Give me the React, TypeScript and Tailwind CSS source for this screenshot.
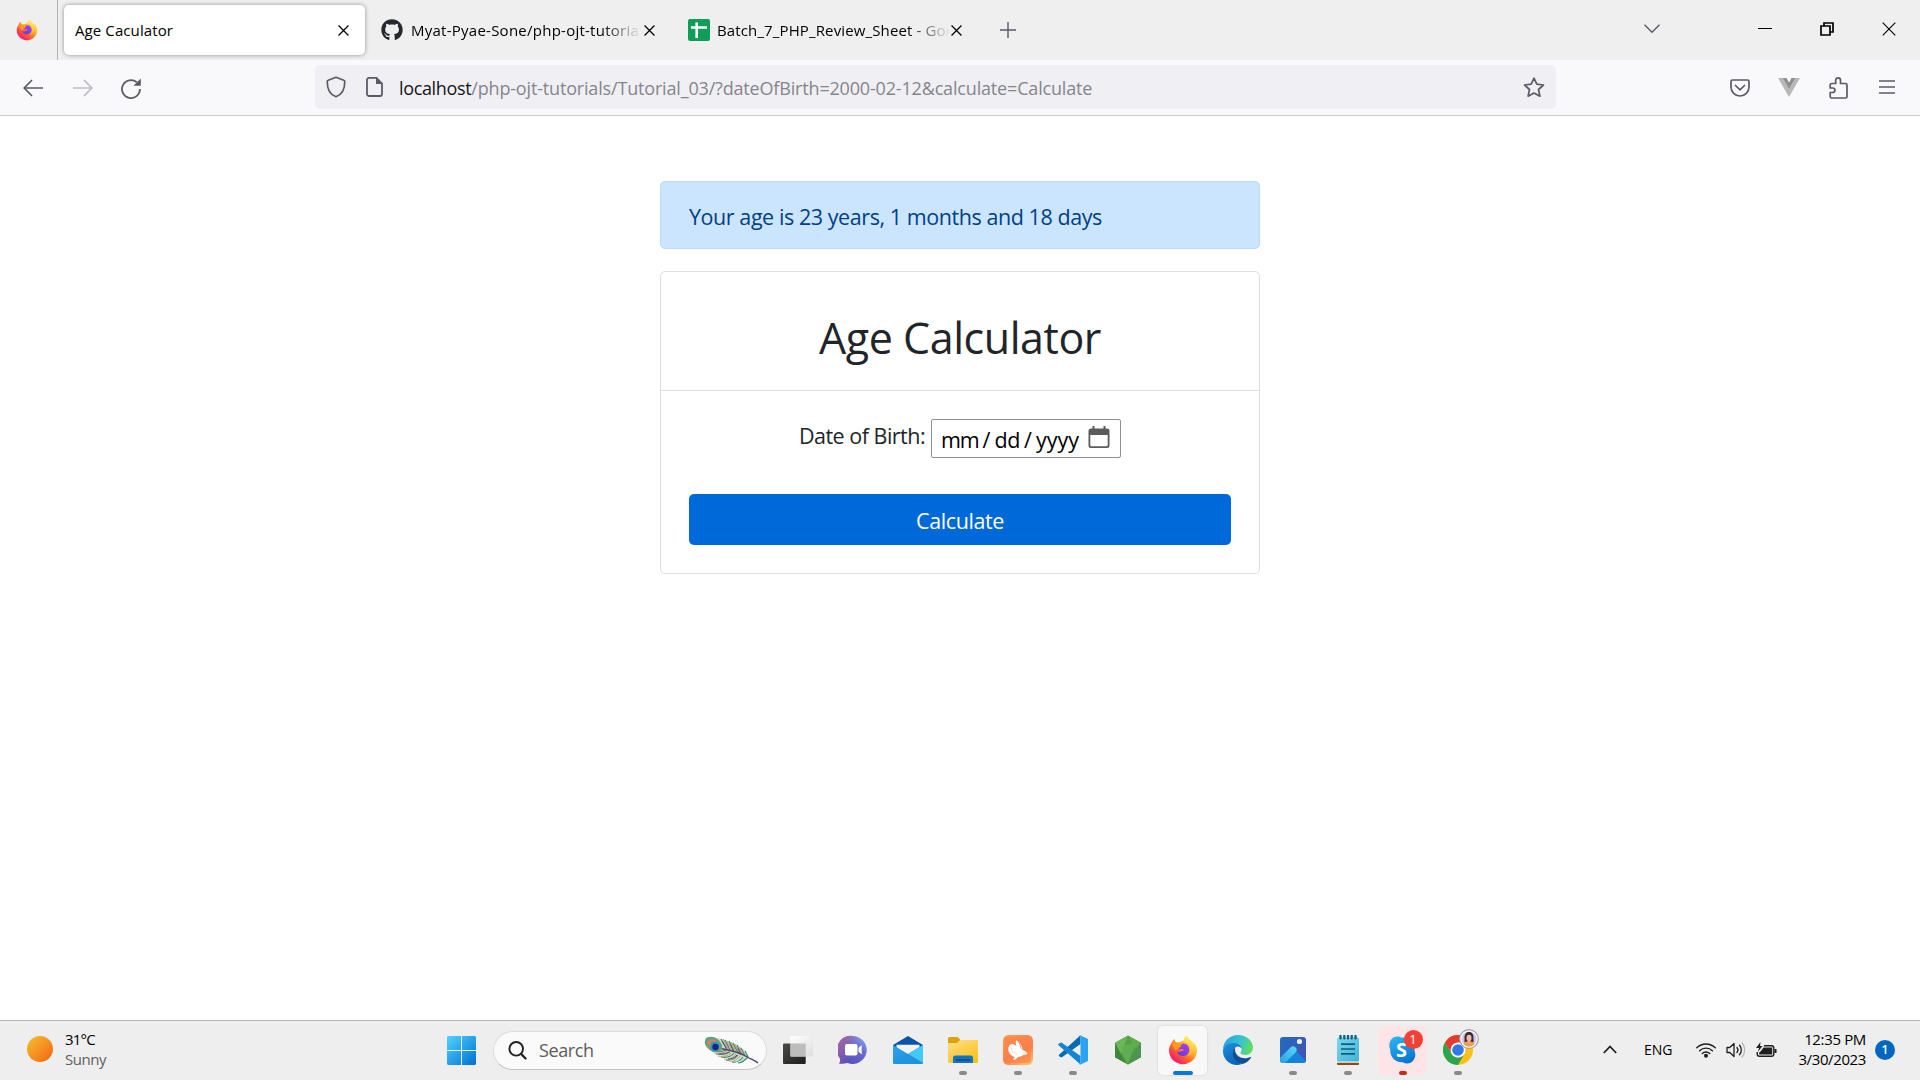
import React from "react";
import { FaGithub } from "react-icons/fa";

const Firefox = ({ id, className }: { id: string; className: string }) => (
  <svg viewBox="0 0 30 30" className={className}>
    <defs>
      <linearGradient id={id + "a"} x1="0.85" y1="0.1" x2="0.15" y2="0.95">
        <stop offset="0" stopColor="#fff44f" />
        <stop offset="0.35" stopColor="#ffb02a" />
        <stop offset="0.6" stopColor="#ff6a2b" />
        <stop offset="0.85" stopColor="#ff2a5c" />
        <stop offset="1" stopColor="#e31587" />
      </linearGradient>
      <linearGradient id={id + "b"} x1="0.8" y1="0" x2="0.2" y2="1">
        <stop offset="0" stopColor="#b03bf0" />
        <stop offset="1" stopColor="#5b3fe0" />
      </linearGradient>
      <linearGradient id={id + "c"} x1="0" y1="0" x2="0" y2="1">
        <stop offset="0" stopColor="#fff36b" />
        <stop offset="1" stopColor="#ffb22a" />
      </linearGradient>
    </defs>
    <path
      d="M18.5.6c-1.7 1.5-2.7 3.5-2.9 5.4-1.9 0-3.6.6-5 1.5-.9-.3-1.8-.3-2.5 0C7.300 6.600 6.600 5.300 6.500 3.900 4.900 4.800 4 6.600 3.600 7.900 2 10 1 12.800 1 15.500 1 23 7.200 29.200 15 29.200S29 23 29 15.500c0-3.600-1.400-7.400-4-9.100.5 1.200.8 2.200.8 3.200C24 5.800 20.300 4.300 18.500.6z"
      fill={"url(#" + id + "a)"}
    />
    <path
      d="M18.5.6c-1.7 1.5-2.7 3.5-2.9 5.6 3.8.8 6.600 4.200 6.600 8.300 0 3-1.700 5.500-3.800 7 4.400-.8 7.400-4.700 7.400-9.300C25.800 6.500 20.500 5 18.500.6z"
      fill={"url(#" + id + "c)"}
      opacity="0.85"
    />
    <path
      d="M15 8.500c3.700 0 6.300 2.800 6.300 6.200 0 3.700-2.900 6.300-6.400 6.300-3.300 0-5.700-2-6.200-4.800 1.500 1 3.300.9 4.600.1 1-.7 1.700-.6 2.200-.8.300-.7-.4-1.500-1.500-1.500-1.200 0-1.800.7-3.100.4 0-1.300.8-2 2.400-2.800.1-.7-.2-1-.7-1.300.6-.9 1.400-1.500 2.400-1.800z"
      fill={"url(#" + id + "b)"}
    />
    <path d="M4 9c1.800-1.400 4.200-1.400 5.700-.3 1.300.1 2.900.4 3.500 1.200-1 1.400-2.500 1.500-2.600 2.800-1 .7-2.300 1.500-2.300 3-1.700-1-2.700-3-4.300-6.700z" fill="#ff9a1f" />
  </svg>
);

const Cross = ({ className, s = 1.5 }: { className: string; s?: number }) => (
  <svg viewBox="0 0 14 14" className={className} fill="none" stroke="currentColor" strokeWidth={s}>
    <path d="M.7.7l12.600 12.600M13.300.7L.7 13.300" />
  </svg>
);

const Taskview = () => (
  <svg viewBox="0 0 30 30" className="size-[30px]">
    <defs>
      <linearGradient id="tv1" x1="0" y1="0" x2="1" y2="1"><stop offset="0" stopColor="#4a4a48" /><stop offset="1" stopColor="#1c1c1b" /></linearGradient>
      <linearGradient id="tv2" x1="0" y1="0" x2="1" y2="1"><stop offset="0" stopColor="#fff" /><stop offset="1" stopColor="#dedede" /></linearGradient>
    </defs>
    <rect x="0" y="8.5" width="22.7" height="20.5" rx="1" fill="url(#tv1)" />
    <rect x="7.5" y="1" width="22.5" height="20.5" rx="1" fill="url(#tv2)" />
    <path d="M7.500 8.500h15.200v13H7.500z" fill="#bdbdbc" />
  </svg>
);

const Chat = () => (
  <svg viewBox="0 0 30 30" className="size-[30px]">
    <defs>
      <linearGradient id="ch" x1="0.9" y1="0.1" x2="0.3" y2="0.9"><stop offset="0" stopColor="#7f9bf0" /><stop offset="0.4" stopColor="#6a6bd0" /><stop offset="1" stopColor="#5850c0" /></linearGradient>
      <linearGradient id="ch2" x1="0" y1="0.2" x2="0.6" y2="0.5"><stop offset="0" stopColor="#a8609c" /><stop offset="1" stopColor="#a8609c" stopOpacity="0" /></linearGradient>
    </defs>
    <path d="M15 1a14 14 0 1 1-5.500 27c-3 .8-6 1.200-8.500.5 1-1.200 1.200-2.800 1-5A14 14 0 0 1 15 1z" fill="url(#ch)" />
    <path d="M15 1a14 14 0 1 1-5.500 27c-3 .8-6 1.200-8.500.5 1-1.200 1.200-2.800 1-5A14 14 0 0 1 15 1z" fill="url(#ch2)" />
    <rect x="7" y="9" width="12.5" height="11.5" rx="2" fill="#fff" />
    <path d="M20.500 13l3.200-3v9.500l-3.200-3z" fill="#fff" />
  </svg>
);

const Mail = () => (
  <svg viewBox="0 0 30 30" className="size-[30px]">
    <defs><linearGradient id="ml" x1="0" y1="0" x2="1" y2="1"><stop offset="0" stopColor="#2fa4e8" /><stop offset="1" stopColor="#1a86d8" /></linearGradient></defs>
    <path d="M0 10L15 1l15 9v4H0z" fill="#0a55a5" />
    <path d="M3.500 9.800h23v6L15 22 3.500 16z" fill="#f2f2f2" />
    <path d="M0 10l15 9 15-9v17.500a1.500 1.500 0 0 1-1.500 1.500h-27A1.500 1.500 0 0 1 0 27.500z" fill="url(#ml)" />
    <path d="M30 10L15 19l15 9z" fill="#42c9f5" />
    <path d="M0 28L15 19l15 9-1 1H1z" fill="#2196e0" opacity=".7" />
  </svg>
);

const Folder = () => (
  <svg viewBox="0 0 30 30" className="size-[30px]">
    <defs><linearGradient id="fo" x1="0" y1="0" x2="0.6" y2="1"><stop offset="0" stopColor="#ffe08a" /><stop offset="1" stopColor="#fdc21c" /></linearGradient></defs>
    <path d="M0 3.500A1.500 1.500 0 0 1 1.500 2H9c1.500 0 2 1.500 3.500 3V10H0z" fill="#dca30a" />
    <path d="M0 8h9l3-3h17a1 1 0 0 1 1 1v21a1 1 0 0 1-1 1H1a1 1 0 0 1-1-1z" fill="url(#fo)" />
    <path d="M5 28v-5a2.500 2.500 0 0 1 2.500-2.500h15A2.500 2.500 0 0 1 25 23v5z" fill="#1272c4" />
    <path d="M8.500 25h13" stroke="#0a4a8a" strokeWidth="1.3" strokeLinecap="round" />
  </svg>
);

const Hare = () => (
  <svg viewBox="0 0 30 30" className="size-[30px]">
    <defs><linearGradient id="sw" x1="0.2" y1="0" x2="0.8" y2="1"><stop offset="0" stopColor="#f99a50" /><stop offset="0.6" stopColor="#fb7f4a" /><stop offset="1" stopColor="#fcbf66" /></linearGradient></defs>
    <rect width="30" height="30" rx="5.5" fill="url(#sw)" />
    <rect x="2" y="2" width="26" height="26" rx="4" fill="#fb7f49" opacity=".6" />
    <path d="M17.500 15.500C13.500 13 12 8.500 13.200 5.200c3 1 5.800 4.800 6.300 9.800 2.300.6 4 1.700 4.700 3.300.2.700-.3 1.200-1.200 1.300-1.300.2-2.500.4-3.400 1-1.500 1-3 1.400-4.600 1.300l-2 2.300c-1 .9-2.800.6-3.300-.2 1.200-.3 1.800-1.200 1.800-2.200C8 21 5.500 18 5.300 14.200 5.200 11.500 6.600 9.300 8.800 9c3 .3 6.500 3 8.700 6.500z" fill="#fff" />
    <path d="M15 5.500c1.500 2.500 2.600 5.500 3.200 8.500" stroke="#fb7f49" strokeWidth=".8" fill="none" />
    <path d="M8 12.500c.5 3.500 3 6 6.500 7" stroke="#fdc4a6" strokeWidth=".7" fill="none" />
  </svg>
);

const Code = () => (
  <svg viewBox="0 0 30 30" className="size-[30px]">
    <path d="M.8 20L22.500.2V9L3.600 22.400 1 21.200z" fill="#0a6ab0" />
    <path d="M3.500 7.500L22.500 21v8.500L.8 10.500c-.7-.7-.7-1.400 0-2z" fill="#1186d6" />
    <path d="M22 .2l7 3.200a1.700 1.700 0 0 1 1 1.600v20a1.700 1.700 0 0 1-1 1.600l-7 3.200c-.8.3-1.500 0-1.800-.4 1 .6 2.300 0 2.300-1.400V2c0-1.400-1.300-2-2.300-1.400.4-.5 1-.7 1.800-.4z" fill="#29a3f2" />
  </svg>
);

const Hex = () => (
  <svg viewBox="0 0 30 30" className="size-[30px]">
    <path d="M15 .5l13 7.300v14.400L15 29.500 2 22.200V7.800z" fill="#55a046" />
    <path d="M15 .5L2 7.800v14.400L6 24z" fill="#6bb557" />
    <path d="M2 7.800v14.400l11 6.200z" fill="#3c873a" />
    <path d="M15 .5l13 7.300-6 5.700z" fill="#5fae4c" />
    <path d="M28 7.800v14.400L15 29.500l-2-1z" fill="#4b9550" />
    <path d="M22 8.500L15 29.500 5.500 11z" fill="#69b357" opacity=".6" />
  </svg>
);

const Edge = () => (
  <svg viewBox="0 0 30 30" className="size-[30px]">
    <defs>
      <linearGradient id="e1" x1="0" y1="0.3" x2="1" y2="0.5"><stop offset="0" stopColor="#2aa5dc" /><stop offset="0.55" stopColor="#35c1d6" /><stop offset="1" stopColor="#62e05a" /></linearGradient>
      <linearGradient id="e2" x1="0" y1="0" x2="0.5" y2="1"><stop offset="0" stopColor="#1f8fe0" /><stop offset="1" stopColor="#0b64b8" /></linearGradient>
    </defs>
    <path d="M0 15C0 6.500 6.500 0 15 0c8.500 0 15 6 15 12.500 0 4.500-3.300 7.500-7.500 7.500-3.500 0-5-1.300-5-2.300s1.200-1.500 1.200-3.700C18.700 11 15.500 8.500 11 8.500 5.500 8.500 1 11.500 0 15z" fill="url(#e1)" />
    <path d="M0 15.500C.5 11 5 8 10.500 8c4.700 0 8.200 2.700 8.200 5.500-1.300-2-4-2.700-5.700-1.500-4 2.600-4.500 13 6 17C9 32.500-.5 25 0 15.500z" fill="url(#e2)" />
    <path d="M12 12.800c-4 4.200-3 13.700 7.500 16.200 4-1.200 6.800-3.500 8.700-6.500.2-.5-.2-.8-.7-.5-8.500 4-16.500-1.500-15.500-9.200z" fill="#0d4f96" />
  </svg>
);

const Photos = () => (
  <svg viewBox="0 0 30 30" className="size-[30px]">
    <defs>
      <linearGradient id="p1" x1="0" y1="0" x2="1" y2="0.7"><stop offset="0" stopColor="#1b6fc4" /><stop offset="1" stopColor="#4a4fb0" /></linearGradient>
      <linearGradient id="p2" x1="0" y1="1" x2="1" y2="0"><stop offset="0" stopColor="#1e9bdc" /><stop offset="1" stopColor="#5ad8fa" /></linearGradient>
      <clipPath id="pc"><rect x="2" y="2" width="26" height="26" rx="3" /></clipPath>
    </defs>
    <g clipPath="url(#pc)">
      <path d="M0 0h30v30H0z" fill="url(#p1)" />
      <path d="M14 12l16 16v2H4z" fill="#1784dc" />
      <path d="M0 25l12.500-12.500a3.500 3.500 0 0 1 5 5L5 30H0z" fill="url(#p2)" />
    </g>
    <circle cx="21.5" cy="6.5" r="2.6" fill="#e8f0fb" />
  </svg>
);

const Notepad = () => (
  <svg viewBox="0 0 30 30" className="size-[30px]">
    <defs><linearGradient id="np" x1="0" y1="0" x2="1" y2="1"><stop offset="0" stopColor="#7bd8ee" /><stop offset="1" stopColor="#3fb3d8" /></linearGradient></defs>
    <path d="M4 26h22v3a1 1 0 0 1-1 1H5a1 1 0 0 1-1-1z" fill="#8a4a1c" />
    <path d="M4 26h22v1.800H4z" fill="#f4f0ea" />
    <rect x="4" y="2.5" width="22" height="24" rx="1.5" fill="url(#np)" />
    <path d="M8 9.200h14M8 14h14M8 18.800h14" stroke="#0c5f7e" strokeWidth="1.7" />
    <path d="M7.500.8v2.600M11.300.8v2.600M15 .8v2.600M18.700.8v2.600M22.500.8v2.600" stroke="#0c5f7e" strokeWidth="2.3" strokeLinecap="round" />
  </svg>
);

const Skype = () => (
  <div className="relative size-[30px]">
    <svg viewBox="0 0 30 30" className="size-[30px]">
      <defs><linearGradient id="sk" x1="0.2" y1="0" x2="0.7" y2="1"><stop offset="0" stopColor="#2db4f0" /><stop offset="1" stopColor="#0474cf" /></linearGradient></defs>
      <path d="M9 1.500c2 0 3.300.5 4.500 1.200 7-.9 13.500 5 13 13 2.500 5.500-1 13-7.500 12.800-1.600 0-3-.4-4.300-1.200C7.500 28 1.700 22 2.200 14.700-.5 8.500 3 1.600 9 1.500z" fill="url(#sk)" />
    </svg>
    <div className="absolute inset-0 flex items-center justify-center pr-[2px] font-['Open_Sans'] text-[20px] font-bold text-white">S</div>
    <div className="absolute -top-[5px] left-[16px] flex size-[19px] items-center justify-center rounded-full bg-[#ef4136] font-['Open_Sans'] text-[13px] text-white">1</div>
  </div>
);

const Chrome = () => (
  <div className="relative size-[30px]">
    <svg viewBox="0 0 30 30" className="size-[30px]">
      <circle cx="15" cy="15" r="15" fill="#fbc116" />
      <path d="M2 7.500A15 15 0 0 1 28 7.500H15L8.500 18.800z" fill="#e33b2e" />
      <path d="M2 7.500l6.500 11.300a7.500 7.500 0 0 0 13 0L15 30A15 15 0 0 1 2 7.500z" fill="#2da44e" />
      <circle cx="15" cy="15" r="7.5" fill="#fff" />
      <circle cx="15" cy="15" r="5.8" fill="#2f79e8" />
    </svg>
    <svg viewBox="0 0 20 20" className="absolute -top-[6px] left-[16px] size-5">
      <circle cx="10" cy="10" r="9.3" fill="#fff" stroke="#a0a0a0" strokeWidth="1.2" />
      <circle cx="10" cy="10" r="7.5" fill="#cfc6ea" />
      <path d="M5.500 13.500V8.500C5.500 5 7.500 3 10 3s4.500 2 4.500 5.500v5z" fill="#3a2a3a" />
      <ellipse cx="10" cy="9" rx="2.5" ry="3.2" fill="#eebfa2" />
      <path d="M4.300 15c1-2 3.200-2.500 5.700-2.500s4.700.5 5.700 2.500a7.500 7.500 0 0 1-11.400 0z" fill="#f0a04c" />
      <path d="M8.500 11.500h3v1.500L10 14.500 8.500 13z" fill="#e5ab8c" />
    </svg>
  </div>
);

const Feather = () => (
  <svg viewBox="0 0 56 28" className="h-[28px] w-[56px]" fill="none">
    <path d="M1 2c2-1.500 8-1 14 .5C27 5 37 10 42 16c1.500 2 3 4 3.500 6.500C35 28 20 22 10 15 4 11 1 6 1 2z" fill="#a9c9a4" opacity=".55" />
    <g stroke="#3f8f74" strokeWidth="1.2">
      <path d="M17 3l6 10M21 4l5 10M25 5l5 10M29 7l5 10M33 9l4 9M37 12l4 8M41 15l3 6" />
      <path d="M8 15c6 1 10 1 14-1M12 18c6 1 10 0 14-2M17 21c6 1 10 0 13-4M22 24c6 1 9-1 12-5M28 26c5 1 8-1 11-5M34 27c4 0 6-2 9-5" />
    </g>
    <g stroke="#c98d5a" strokeWidth=".9">
      <path d="M19 3l6 11M23 5l5 10M27 6l5 10M31 8l4 9M35 11l4 8" />
      <path d="M10 17c6 1 9 0 13-2M14 20c6 1 9 0 13-3M20 23c5 1 9-1 12-5M25 25c5 1 8-1 11-5" />
    </g>
    <g stroke="#5a4a86" strokeWidth="1"><path d="M18 5l5 9M26 8l4 8M34 12l3 7M15 18c4 0 7 0 10-2M24 23c4 0 6-1 9-4" /></g>
    <path d="M14 12c12 2 25 6 31 10 4 2 7 3 9 5" stroke="#54436b" strokeWidth="1.3" />
    <ellipse cx="9.5" cy="8.5" rx="9.5" ry="6.8" transform="rotate(35 9.5 8.5)" fill="#5ba37c" />
    <ellipse cx="9.8" cy="9" rx="7.5" ry="5.3" transform="rotate(35 9.8 9)" fill="#c4866a" />
    <circle cx="11" cy="10.5" r="4.7" fill="#1f9dbb" />
    <circle cx="11.5" cy="11" r="3.2" fill="#17248f" />
  </svg>
);

const apps = [
  { el: <Taskview />, tile: "", dot: "" },
  { el: <Chat />, tile: "", dot: "" },
  { el: <Mail />, tile: "", dot: "" },
  { el: <Folder />, tile: "", dot: "w-2 bg-[#8a8a8a]" },
  { el: <Hare />, tile: "", dot: "w-2 bg-[#8a8a8a]" },
  { el: <Code />, tile: "", dot: "w-2 bg-[#8a8a8a]" },
  { el: <Hex />, tile: "", dot: "" },
  { el: <Firefox id="tb" className="size-[30px]" />, tile: "bg-[#f8f8f8] shadow-[0_0_1px_1px_#e2e2e2]", dot: "w-5 bg-[#0a78d6]" },
  { el: <Edge />, tile: "", dot: "" },
  { el: <Photos />, tile: "", dot: "w-2 bg-[#8a8a8a]" },
  { el: <Notepad />, tile: "", dot: "w-2 bg-[#8a8a8a]" },
  { el: <Skype />, tile: "bg-[#fde5e7]", dot: "w-2 bg-[#c42b1c]" },
  { el: <Chrome />, tile: "", dot: "w-2 bg-[#8a8a8a]" },
];

const T = ({ className = "", children }: { className?: string; children: React.ReactNode }) => (
  <span className={"whitespace-pre " + className}>{children}</span>
);

export default function App() {
  return (
    <div className="flex h-[1080px] w-[1920px] flex-col overflow-hidden bg-white font-['Open_Sans',sans-serif] text-black">
      <header className="flex h-[60px] shrink-0 items-center bg-[#efefef]">
        <div className="flex h-full w-[58px] items-center justify-center border-r border-[#b0b0b4] pr-1">
          <Firefox id="pin" className="size-[22px]" />
        </div>
        <div className="ml-[6px] flex h-[50px] w-[301px] items-center justify-between rounded-[5px] bg-white pl-[11px] pr-4 shadow-[0_0_4px_rgba(0,0,0,0.4)]">
          <T className="text-[15px] tracking-[0.1px]">Age Caculator</T>
          <Cross className="size-[11px]" s={1.6} />
        </div>
        <div className="ml-4 flex items-center">
          <FaGithub className="size-[22px] text-[#24292f]" />
          <div className="ml-[8px] w-[228px] overflow-hidden [mask-image:linear-gradient(to_right,black_190px,transparent_230px)]">
            <T className="text-[15px] tracking-[0.25px]">Myat-Pyae-Sone/php-ojt-tutorials</T>
          </div>
          <Cross className="ml-[5px] size-[11px]" s={1.6} />
        </div>
        <div className="ml-[33px] flex items-center">
          <svg viewBox="0 0 22 22" className="size-[22px]"><rect width="22" height="22" rx="2" fill="#0f9d58" /><path d="M8.700 3.500v15.500M3 8.500h16" stroke="#fff" strokeWidth="2.6" /></svg>
          <div className="ml-[7px] w-[231px] overflow-hidden [mask-image:linear-gradient(to_right,black_190px,transparent_234px)]">
            <T className="text-[15px] tracking-[0.13px]">Batch_7_PHP_Review_Sheet - Goog</T>
          </div>
          <Cross className="ml-[3px] size-[11px]" s={1.6} />
        </div>
        <svg viewBox="0 0 16 16" className="ml-[38px] size-4 text-[#5b5b66]" stroke="currentColor" strokeWidth="1.4"><path d="M8 0v16M0 8h16" /></svg>
        <svg viewBox="0 0 16 10" className="ml-auto -mt-[3px] h-[10px] w-4" fill="none" stroke="#5b5b66" strokeWidth="1.5"><path d="M.5.8l7.500 7.500 7.500-7.500" /></svg>
        <div className="ml-[98px] -mt-[3px] h-px w-[14px] bg-black" />
        <svg viewBox="0 0 14 14" className="-mt-[2px] ml-12 size-[14px]" fill="none" stroke="#000" strokeWidth="1.7"><path d="M1 4h9v9H1zM4 3.500V1h9v9h-2.500" /></svg>
        <Cross className="-mt-[2px] ml-12 mr-6 size-[14px]" s={1.1} />
      </header>

      <nav className="flex h-[56px] shrink-0 items-start border-b border-[#cccccf] bg-[#f9f9fb] text-[#5b5b66]">
        <div className="flex h-[55px] w-[315px] items-center pl-[23px]">
          <svg viewBox="0 0 20 18" className="h-[18px] w-5" fill="none" stroke="currentColor" strokeWidth="1.7"><path d="M20 9H1.500M9 1L1.200 9 9 17" /></svg>
          <svg viewBox="0 0 20 18" className="ml-[30px] h-[18px] w-5" fill="none" stroke="#bdbdc3" strokeWidth="1.7"><path d="M0 9h18.500M11 1l7.800 8-7.800 8" /></svg>
          <svg viewBox="0 0 20 21" className="ml-[28px] mt-[2px] h-[21px] w-5" fill="none" stroke="currentColor" strokeWidth="1.8"><path d="M19 11a9 9 0 1 1-3.200-6.800" /><path d="M19.800.5v7.300h-7.300z" fill="currentColor" stroke="none" /></svg>
        </div>
        <div className="mt-[5px] flex h-[44px] w-[1241px] items-center rounded-[5px] bg-[#f0f0f4] pl-[11px] pr-[11px]">
          <svg viewBox="0 0 20 22" className="h-[22px] w-5" fill="none" stroke="currentColor" strokeWidth="1.7"><path d="M10 1.200l7.800 3c.6.2 1 .7 1 1.300C18.800 13 16.500 18.500 10 20.800 3.500 18.500 1.200 13 1.200 5.500c0-.6.4-1.100 1-1.300z" strokeLinejoin="round" /></svg>
          <svg viewBox="0 0 17 20" className="ml-[20px] h-5 w-[17px]" fill="none" stroke="currentColor" strokeWidth="1.8"><path d="M3 .9h7.500L16 6.500V17a2 2 0 0 1-2 2H3a2 2 0 0 1-2-2V3A2 2 0 0 1 3 .9z" /><path d="M10 .5V7h6.500z" fill="currentColor" stroke="none" /></svg>
          <div className="ml-[16px] mt-[2px] flex text-[18px] text-[#85858c]">
            <T className="tracking-[-0.35px] text-[#15141a]">localhost</T>
            <T className="tracking-[-0.17px]">/php-ojt-tutorials/Tutorial_03/?dateOfBirth=2000-02-12&amp;calculate=Calculate</T>
          </div>
          <svg viewBox="0 0 22 21" className="ml-auto h-[21px] w-[22px]" fill="none" stroke="currentColor" strokeWidth="1.7" strokeLinejoin="round"><path d="M11 1.200l2.800 6 6.700.8-5 4.500 1.400 6.700L11 16l-5.900 3.200 1.400-6.700-5-4.500 6.700-.8z" /></svg>
        </div>
        <div className="ml-auto flex h-[55px] items-center pr-[25px]">
          <svg viewBox="0 0 20 18" className="h-[18px] w-5" fill="none" stroke="currentColor" strokeWidth="1.7"><path d="M2.500 1h15A1.500 1.500 0 0 1 19 2.500V8A9 9 0 0 1 1 8V2.500A1.500 1.500 0 0 1 2.500 1z" /><path d="M5.500 6.500L10 10.800l4.500-4.300" strokeLinecap="round" /></svg>
          <svg viewBox="0 0 22 19" className="ml-7 h-[19px] w-[22px]"><path d="M0 0h4.500L11 11.300 17.500 0H22L11 19z" fill="#b8b8b8" /><path d="M4.500 0h4L11 4.500 13.500 0h4L11 11.300z" fill="#8f8f8f" /></svg>
          <svg viewBox="0 0 19 22" className="ml-[29px] h-[22px] w-[19px]" fill="none" stroke="currentColor" strokeWidth="1.7"><path d="M1.200 11V8A1.500 1.500 0 0 1 2.700 6.500h4V3.300a2.400 2.400 0 0 1 4.800 0v3.200h5A1.500 1.500 0 0 1 18 8v11.500a1.500 1.500 0 0 1-1.500 1.500H2.700a1.500 1.500 0 0 1-1.500-1.500v-4h2.500a2.200 2.200 0 0 0 0-4.500z" /></svg>
          <svg viewBox="0 0 16 14" className="-mt-[1px] ml-[31px] h-[14px] w-4" stroke="currentColor" strokeWidth="1.5"><path d="M0 1h16M0 7h16M0 13h16" /></svg>
        </div>
      </nav>

      <main className="flex grow flex-col items-center pt-[65px] text-[21.5px] text-[#212529]">
        <div className="flex h-[68px] w-[600px] items-center rounded-[5px] border border-[#b8daff] bg-[#cce5ff] pl-7 pt-[5px] text-[#004085]">
          <T className="tracking-[-0.43px]">Your age is 23 years, 1 months and 18 days</T>
        </div>
        <section className="mt-[22px] flex h-[303px] w-[600px] flex-col rounded-[5px] border border-[#dfdfdf]">
          <div className="flex h-[119px] shrink-0 items-center justify-center border-b border-[#dfdfdf] pt-[15px]">
            <T className="text-[43px] tracking-[-0.45px]">Age Calculator</T>
          </div>
          <div className="flex flex-col items-center px-7 pt-7">
            <div className="flex h-[39px] items-center">
              <T className="-mt-[5px] tracking-[-0.5px]">Date of Birth:</T>
              <div className="ml-[6px] flex h-[39px] w-[190px] items-center rounded-[2px] border border-[#8f8f9d] bg-white pl-[9px] text-black">
                <div className="mt-[3px] flex w-[138px] justify-between"><T className="tracking-[-1.3px]">mm</T><T>/</T><T className="tracking-[-0.5px]">dd</T><T>/</T><T>yyyy</T></div>
                <svg viewBox="0 0 22 23" className="-mt-[3px] ml-[9px] h-[23px] w-[22px]"><path d="M3 2.500h16A2.500 2.500 0 0 1 21.500 5v14.500A2.500 2.500 0 0 1 19 22H3A2.500 2.500 0 0 1 .5 19.500V5A2.500 2.500 0 0 1 3 2.500zM2.300 9v10a1.200 1.200 0 0 0 1.200 1.200h15a1.200 1.200 0 0 0 1.200-1.200V9z" fill="#5b5b5b" fillRule="evenodd" /><path d="M5.500 0v4M16.500 0v4" stroke="#5b5b5b" strokeWidth="2" /></svg>
              </div>
            </div>
            <button className="mt-9 flex h-[51px] w-full items-center justify-center rounded-[5px] bg-[#0069d9] pt-1 text-white"><T className="tracking-[-0.4px]">Calculate</T></button>
          </div>
        </section>
      </main>

      <footer className="flex h-[60px] shrink-0 items-center border-t border-[#b9b9b9] bg-[#eeeeee] text-[15px]">
        <div className="flex w-[447px] items-center pl-[27px]">
          <div className="-mt-[3px] size-[26px] rounded-full bg-linear-to-br from-[#f0c02e] via-[#f49321] to-[#ee6210]" />
          <div className="-mt-1 ml-3 flex flex-col leading-5"><T className="tracking-[-0.8px]">31°C</T><T className="tracking-[-0.45px] text-[#5f5f5f]">Sunny</T></div>
        </div>
        <svg viewBox="0 0 29 29" className="size-[29px]"><defs><linearGradient id="wl" x1="0" y1="0" x2="29" y2="29" gradientUnits="userSpaceOnUse"><stop offset="0" stopColor="#50d3fe" /><stop offset="1" stopColor="#0070d2" /></linearGradient></defs><path d="M1 0h13v14H0V1zM15 0h13l1 1v13H15zM0 15h14v14H1l-1-1zM15 15h14v13l-1 1H15z" fill="url(#wl)" /></svg>
        <div className="-mt-px ml-[17px] flex h-[39px] w-[274px] items-center rounded-full border border-[#dcdcdc] border-b-[#c4c4c4] bg-[#fafafa] pl-[14px] pr-[6px]">
          <svg viewBox="0 0 19 19" className="size-[19px]" fill="none" stroke="#222" strokeWidth="1.9" strokeLinecap="round"><circle cx="8.2" cy="7.8" r="6.8" /><path d="M13.200 13l4.300 4.500" strokeWidth="2.3" /></svg>
          <T className="ml-3 text-[18px] tracking-[-0.4px] text-[#5c5c5c]">Search</T>
          <div className="ml-auto"><Feather /></div>
        </div>
        <div className="-mt-px ml-[3px] flex">
          {apps.map((a, i) => (
            <div key={i} className="flex w-[55px] justify-center">
              <div className={"relative flex size-[49px] items-center justify-center rounded-[5px] " + a.tile}>
                {a.el}
                <div className={"absolute bottom-0 h-1 rounded-full " + a.dot} />
              </div>
            </div>
          ))}
        </div>
        <div className="-mt-[2px] ml-auto flex items-center pr-[25px]">
          <svg viewBox="0 0 14 9" className="h-[9px] w-[14px]" fill="none" stroke="#1f1f1f" strokeWidth="1.8"><path d="M.8 8L7 1.500 13.200 8" /></svg>
          <T className="ml-[27px] w-7 text-[14px]">ENG</T>
          <svg viewBox="0 0 20 16" className="ml-[24px] h-4 w-5" fill="none" stroke="#1f1f1f" strokeWidth="1.4" strokeLinecap="round"><path d="M.8 5.800a13 13 0 0 1 18.400 0M3.600 8.800a9 9 0 0 1 12.800 0M6.300 11.600a5.200 5.200 0 0 1 7.400 0" /><circle cx="10" cy="13.8" r="1.3" fill="#1f1f1f" /></svg>
          <svg viewBox="0 0 20 16" className="ml-[10px] h-4 w-5" fill="none" stroke="#1f1f1f" strokeWidth="1.3" strokeLinecap="round"><path d="M1 5.500h2.800L8 1.500v13l-4.200-4H1z" strokeLinejoin="round" /><path d="M11 5.500a4 4 0 0 1 0 5M13.500 3.300a7 7 0 0 1 0 9.400" /><path d="M16 1a10.500 10.500 0 0 1 0 14" stroke="#b5b5b5" /></svg>
          <svg viewBox="0 0 21 16" className="ml-[10px] h-4 w-[21px]"><path d="M8 3.700h7.500a2.300 2.300 0 0 1 2.300 2.300v6a2.300 2.300 0 0 1-2.300 2.300h-12A2.300 2.300 0 0 1 1.200 12v-2" fill="none" stroke="#1f1f1f" strokeWidth="1.4" /><path d="M7.500 5.600h8.700v6.900H3.200V10.500L5 9z" fill="#1f1f1f" /><path d="M18.500 7h2v4h-2z" fill="#1f1f1f" /><path d="M4.500 0L0 6h3L1.800 10 6.500 4H4z" fill="#1f1f1f" /></svg>
          <div className="-mt-[2px] ml-[20px] flex w-[69px] flex-col items-end leading-5"><T className="tracking-[-0.35px]">12:35 PM</T><T className="tracking-[-0.38px]">3/30/2023</T></div>
          <div className="ml-[9px] flex size-5 items-center justify-center rounded-full bg-[#0067c0] text-[12px] font-semibold text-white">1</div>
        </div>
      </footer>
    </div>
  );
}
